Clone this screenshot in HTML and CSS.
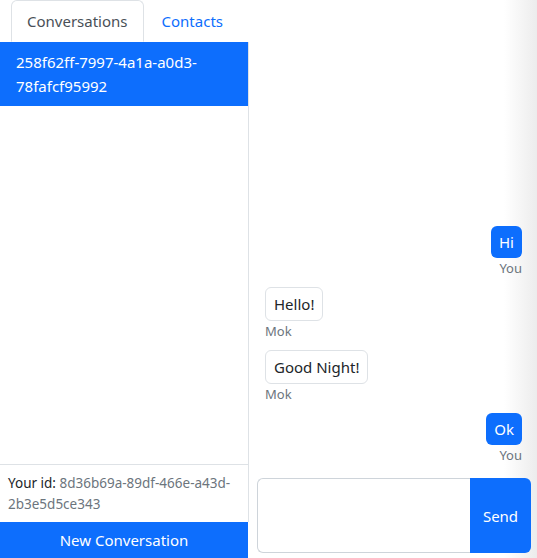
FILE: index.html
```html
<!DOCTYPE html>
<html lang="en">
<head>
<meta charset="utf-8">
<title>Chat</title>
<link rel="stylesheet" href="styles.css">
</head>
<body>
<div class="app">
  <aside class="sidebar">
    <nav class="tabs">
      <span class="tab active">Conversations</span>
      <span class="tab">Contacts</span>
    </nav>
    <div class="list">
      <div class="list-item active">258f62ff-7997-4a1a-a0d3-78fafcf95992</div>
    </div>
    <div class="footer">
      <div class="your-id">Your id: <span class="muted">8d36b69a-89df-466e-a43d-2b3e5d5ce343</span></div>
    </div>
    <button class="new-btn">New Conversation</button>
  </aside>
  <main class="chat">
    <div class="messages">
      <div class="msg mine"><div class="bubble">Hi</div><div class="who">You</div></div>
      <div class="msg theirs"><div class="bubble">Hello!</div><div class="who">Mok</div></div>
      <div class="msg theirs"><div class="bubble">Good Night!</div><div class="who">Mok</div></div>
      <div class="msg mine"><div class="bubble">Ok</div><div class="who">You</div></div>
    </div>
    <form class="composer">
      <textarea class="input"></textarea>
      <button type="button" class="send">Send</button>
    </form>
  </main>
</div>
</body>
</html>
```
FILE: styles.css
```css
* { box-sizing: border-box; }
html, body { margin: 0; height: 100%; }
body {
  font-family: "Noto Sans", "Open Sans", sans-serif;
  font-size: 15px;
  line-height: 24px;
  color: #212529;
  background: #fff;
}
.app {
  display: flex;
  height: 558px;
  overflow: hidden;
}
.sidebar {
  width: 249px;
  flex: none;
  display: flex;
  flex-direction: column;
}
.tabs {
  display: flex;
  gap: 2px;
  padding-left: 11px;
  height: 42px;
  flex: none;
}
.tab {
  padding: 8px 15px;
  height: 42px;
  color: #0d6efd;
  border: 1px solid transparent;
  border-radius: 6px 6px 0 0;
}
.tab.active {
  color: #495057;
  border-color: #dee2e6 #dee2e6 transparent;
}
.list {
  flex: 1;
  border-right: 1px solid #dee2e6;
}
.list-item {
  padding: 8px 16px;
  background: #0d6efd;
  color: #fff;
  word-break: break-word;
}
.footer {
  border-top: 1px solid #dee2e6;
  border-right: 1px solid #dee2e6;
  padding: 8px 8px 7px;
  font-size: 13.5px;
  line-height: 21px;
}
.muted { color: #6c757d; }
.new-btn {
  width: 248px;
  height: 36px;
  border: 0;
  padding: 0;
  background: #0d6efd;
  color: #fff;
  font: inherit;
}
.chat {
  flex: 1;
  display: flex;
  flex-direction: column;
  background: linear-gradient(to right, #fff 0, #fff 255px, #ececec 100%);
}
.messages {
  flex: 1;
  display: flex;
  flex-direction: column;
  justify-content: flex-end;
  gap: 8px;
  padding: 0 15px 0 16px;
}
.msg {
  display: flex;
  flex-direction: column;
}
.msg.mine { align-items: flex-end; }
.msg.theirs { align-items: flex-start; }
.bubble {
  padding: 4px 8px;
  border-radius: 6px;
}
.mine .bubble {
  background: #0d6efd;
  color: #fff;
}
.theirs .bubble {
  background: #fff;
  border: 1px solid #dee2e6;
}
.who {
  font-size: 13px;
  line-height: 21px;
  color: #6c757d;
}
.composer {
  display: flex;
  height: 75px;
  margin: 12px 6px 5px 8px;
  flex: none;
}
.input {
  flex: 1;
  border: 1px solid #ced4da;
  border-right: 0;
  border-radius: 6px 0 0 6px;
  resize: none;
  background: #fff;
  font: inherit;
}
.send {
  width: 61px;
  border: 0;
  border-radius: 0 6px 6px 0;
  background: #0d6efd;
  color: #fff;
  font: inherit;
  padding: 0;
}
```
